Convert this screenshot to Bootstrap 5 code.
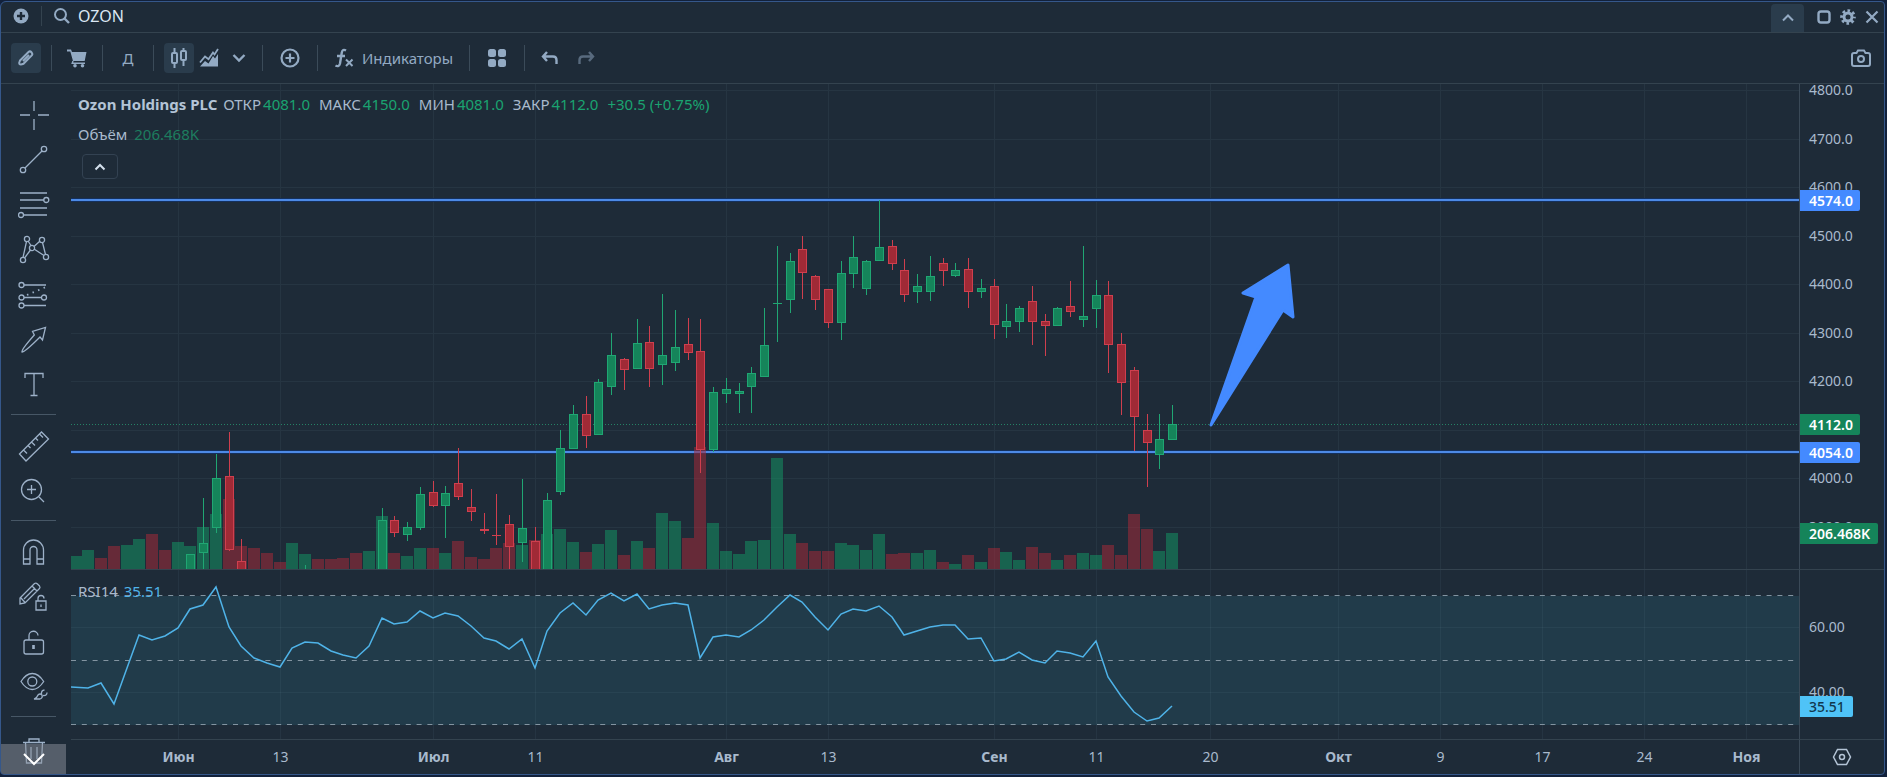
<!DOCTYPE html>
<html lang="ru">
<head>
<meta charset="utf-8">
<meta name="viewport" content="width=device-width, initial-scale=1">
<title>OZON</title>
<link href="https://cdn.jsdelivr.net/npm/bootstrap@5.3.0/dist/css/bootstrap.min.css" rel="stylesheet">
<style>
  :root { --bg:#1e2b38; --line:#34434f; --ink:#93aac3; --text:#a9bacd; --edge:#35578a; --up:#1aa370; }
  html, body { height:100%; }
  body { background:#12213b; color:var(--text); font-family:"Noto Sans","Open Sans",sans-serif; font-size:15px; line-height:20px; overflow:hidden; }
  .shell { height:100vh; padding:1px 2px 2px 0; }
  .win { background:var(--bg); border:1px solid var(--edge); border-radius:6px 4px 4px 4px; overflow:hidden; }
  .win button { background:none; border:0; padding:0; color:var(--ink); display:flex; align-items:center; justify-content:center; flex:none; }
  svg { display:block; }
  .titlebar { height:31px; padding-bottom:2px; border-bottom:1px solid var(--line); }
  .toolbar { height:51px; border-bottom:1px solid var(--line); }
  .ticker { background:none; border:0; outline:0; color:#dbe7f3; font-size:16px; width:160px; padding:0; line-height:20px; }
  .win .tbtn { width:30px; height:30px; border-radius:4px; }
  .win .tbtn.active, .win .tabup { background:#2a3c4c; }
  .win .tabup { width:33px; height:28px; border-radius:4px 4px 0 0; margin-bottom:-2px; }
  .win .slim { width:24px; }
  .win .wide { width:34px; }
  .vsep { width:1px; height:26px; background:#3b4b59; flex:none; }
  .vsep-s { width:1px; height:20px; background:#34434f; flex:none; }
  .rail { width:70px; min-height:0; overflow:hidden; padding-top:8px; flex:none; }
  .rail button { width:66px; height:45px; }
  .rail hr { width:45px; margin:7px 0 8px 10px; border:0; border-top:1px solid #475766; opacity:1; flex:none; }
  .rail svg { width:32px; height:32px; fill:none; stroke:#9db1c8; stroke-width:1.3; }
  .win .more { left:0; bottom:0; width:65px; height:30px; background:rgba(140,145,155,.5); z-index:2; color:#fff; }
  .rail .more svg { stroke:#fff; stroke-width:2; }
  .work { min-height:0; }
  .board { display:grid; grid-template-columns:minmax(0,1fr) 85px; grid-template-rows:minmax(0,1fr) 170px 34px; }
  .board > div { min-width:0; min-height:0; position:relative; overflow:hidden; }
  .board svg.plot { width:100%; height:100%; }
  .pane { border-bottom:1px solid var(--line); }
  .scale { border-left:1px solid #3a4957; }
  .legend-box { left:7px; top:10px; gap:10px; }
  .legend-row { gap:9px; }
  .legend-row b { color:#b4c4d6; font-weight:700; margin-right:2px; }
  .up { color:var(--up); }
  .legend-row span .up { margin-left:2px; }
  .vol { color:#1d7d5f; margin-left:3px; }
  .win .fold { width:36px; height:25px; border:1px solid #334252; border-radius:4px; margin-left:4px; color:#d3dfec; }
  .rsi-legend { left:7px; top:11px; }
  .rsi-legend span { color:#4fb3e8; margin-left:2px; }
  .plot text { fill:var(--text); font-size:14px; }
  .plot text.strong { font-weight:700; }
  .plot .tagtext { fill:#fff; font-weight:600; }
  .plot .darktag { fill:#12384e; font-weight:500; }
</style>
</head>
<body>
<div class="shell d-flex">
<main class="win d-flex flex-column flex-grow-1">

  <header class="titlebar d-flex align-items-center">
    <button class="slim ms-2 me-1" aria-label="Добавить"><svg width="16" height="16" viewBox="0 0 16 16"><circle cx="8" cy="8" r="7.5" fill="#93aac3"/><path d="M8 4v8M4 8h8" stroke="#1e2b38" stroke-width="2.4"/></svg></button>
    <span class="vsep-s ms-1 me-2"></span>
    <label for="ticker" class="me-2 ms-1" aria-label="Поиск"><svg width="16" height="16" viewBox="1 1 16 16" fill="none" stroke="#93aac3"><circle cx="7.5" cy="7.5" r="5.5" stroke-width="2"/><path d="M11.5 11.5L16 16" stroke-width="2.4"/></svg></label>
    <input id="ticker" class="ticker" value="OZON">
    <div class="ms-auto d-flex align-items-center align-self-end">
      <button class="tabup me-2" aria-label="Свернуть панель"><svg width="14" height="10" viewBox="0 0 14 10" fill="none" stroke="currentColor" stroke-width="2"><path d="M2 7.500L7 2.500L12 7.500"/></svg></button>
      <button class="slim" aria-label="Развернуть"><svg width="14" height="14" viewBox="0 0 14 14" fill="none" stroke="currentColor" stroke-width="2.400"><rect x="1.500" y="1.500" width="11" height="11" rx="2.500"/></svg></button>
      <button class="slim" aria-label="Настройки"><svg width="16" height="16" viewBox="-8 -8 16 16" fill="none" stroke="currentColor"><circle r="4" stroke-width="3"/><circle r="6.400" stroke-width="2.800" stroke-dasharray="2.600 2.427" stroke-dashoffset="1.300"/></svg></button>
      <button class="slim" aria-label="Закрыть"><svg width="14" height="14" viewBox="0 0 14 14" fill="none" stroke="currentColor" stroke-width="2.200"><path d="M1.500 1.500L12.500 12.500M12.500 1.500L1.500 12.500"/></svg></button>
    </div>
  </header>

  <nav class="toolbar d-flex align-items-center">
    <button class="tbtn active" style="margin-left:10px;margin-right:10px" aria-label="Рисование"><svg width="18" height="18" viewBox="0 0 18 18" fill="none" stroke="currentColor" stroke-width="2" stroke-linejoin="round"><path d="M3 11.500L11.500 3Q13 1.700 14.500 3.300Q16 5 14.800 6.400L6.500 14.800Q3.500 16 2.500 15Q1.800 14 3 11.500ZM6 12L12 6"/></svg></button>
    <span class="vsep"></span>
    <button class="tbtn wide mx-2" aria-label="Заявка"><svg width="20" height="20" viewBox="0 0 20 20" fill="currentColor"><path d="M0 1.500h4l1 2.500h14.500l-1.800 9H6L3.300 3.500H0z"/><path d="M6 13l-.8 2.200H18" fill="none" stroke="currentColor" stroke-width="1.400"/><circle cx="8" cy="17.700" r="1.800"/><circle cx="15.500" cy="17.700" r="1.800"/></svg></button>
    <span class="vsep"></span>
    <button class="tbtn wide mx-2" aria-label="Интервал: день">Д</button>
    <span class="vsep"></span>
    <button class="tbtn active" style="margin-left:10px" aria-label="Свечи"><svg width="18" height="20" viewBox="0 0 18 20" fill="none" stroke="currentColor" stroke-width="2"><path d="M4.500 0v5M4.500 15v5M13.500 0v3M13.500 12v6"/><rect x="2" y="5" width="5" height="10" rx="1"/><rect x="11" y="3" width="5" height="9" rx="1"/></svg></button>
    <button class="tbtn" aria-label="Область"><svg width="20" height="20" viewBox="0 0 20 20"><path d="M1 18.500L6 13l3.500 2.500L14 8l2 2.500L19 6v12.500z" fill="#93aac3"/><path d="M1 14.500L6 8.500l3.500 2.800L14 4.500l1.500 2L19 1" fill="none" stroke="#93aac3" stroke-width="1.800"/></svg></button>
    <button class="tbtn" aria-label="Другие типы графика"><svg width="14" height="10" viewBox="0 0 14 10" fill="none" stroke="currentColor" stroke-width="2.400"><path d="M1.500 2L7 7.500L12.500 2"/></svg></button>
    <span class="vsep ms-2 me-2"></span>
    <button class="tbtn mx-1" aria-label="Сравнить"><svg width="20" height="20" viewBox="0 0 20 20" fill="none" stroke="currentColor" stroke-width="2.200"><circle cx="10" cy="10" r="8.500"/><path d="M10 5.500v9M5.500 10h9"/></svg></button>
    <span class="vsep mx-2"></span>
    <button class="gap-2 px-2"><svg width="20" height="20" viewBox="0 0 20 20" fill="none" stroke="currentColor" stroke-width="2"><path d="M12 2.500Q8.600 .500 7.800 4.500L6 15.500Q5 19.500 1.500 17.500M3 8h8" stroke-width="2.400"/><path d="M12 11.500l6.500 6.500M18.500 11.500L12 18"/></svg><span>Индикаторы</span></button>
    <span class="vsep mx-2 me-1" style="margin-left:12px"></span>
    <button class="tbtn mx-2" aria-label="Шаблоны"><svg width="18" height="18" viewBox="0 0 18 18" fill="currentColor"><rect width="8" height="8" rx="2.500"/><rect x="10" width="8" height="8" rx="2.500"/><rect y="10" width="8" height="8" rx="2.500"/><rect x="10" y="10" width="8" height="8" rx="2.500"/></svg></button>
    <span class="vsep ms-1"></span>
    <button class="tbtn wide ms-2 me-1" aria-label="Отменить"><svg width="18" height="16" viewBox="0 0 18 16" fill="none" stroke="currentColor" stroke-width="2.400"><path d="M6 2L2 6.500L6 11M2.500 6.500H12Q15.500 6.500 15.500 10V14"/></svg></button>
    <button class="tbtn opacity-50" aria-label="Повторить"><svg width="18" height="16" viewBox="0 0 18 16" fill="none" stroke="currentColor" stroke-width="2.400"><path d="M12 2L16 6.500L12 11M15.500 6.500H6Q2.500 6.500 2.500 10V14"/></svg></button>
    <button class="tbtn ms-auto me-2" aria-label="Снимок"><svg width="20" height="18" viewBox="0 0 20 18" fill="none" stroke="currentColor" stroke-width="2"><path d="M3 4H5.500L7 1.500H13L14.500 4H17Q19 4 19 6V15Q19 17 17 17H3Q1 17 1 15V6Q1 4 3 4Z"/><circle cx="10" cy="10" r="3"/></svg></button>
  </nav>

  <div class="work d-flex flex-grow-1 position-relative">
    <aside class="rail d-flex flex-column">
      <button aria-label="Перекрестие"><svg viewBox="-16 -16 32 32"><path d="M0-14V-4M0 4V15M-14 0H-4M4 0H15"/></svg></button>
      <button aria-label="Линия"><svg viewBox="-16 -16 32 32"><circle cx="10" cy="-11" r="2.700"/><circle cx="-11" cy="10" r="2.700"/><path d="M-9 8L8-9"/></svg></button>
      <button aria-label="Уровни"><svg viewBox="-16 -16 32 32"><path d="M-14-12H13M-14-5H10M-14 3H13M-11 10H13"/><circle cx="12.300" cy="-5" r="2.500"/><circle cx="-13" cy="10" r="2.500"/></svg></button>
      <button aria-label="Паттерны"><svg viewBox="-16 -16 32 32"><circle cx="-7" cy="-11" r="2.600"/><circle cx="8" cy="-10" r="2.600"/><circle cx="-2" cy="-2" r="2.600"/><circle cx="-11" cy="10" r="2.600"/><circle cx="12" cy="7" r="2.600"/><path d="M-7.500-8.500L-11 7.500M-9.500 8L-3.500 0M-6-9L-3-4.500M0-3.500L6-9M0-1L10 5.500M8.500-7.500L11.500 4.500"/></svg></button>
      <button aria-label="Прогноз"><svg viewBox="-16 -16 32 32"><circle cx="-12.500" cy="-10" r="2.500"/><circle cx="-12.500" cy="2.500" r="2.500"/><circle cx="10" cy="2.500" r="2.500"/><circle cx="-12.500" cy="10.500" r="2.500"/><path d="M-10-10H12M-10 2.500H7.500M-10 10.500H12"/><path d="M-7 0L12-8" stroke-dasharray="1.500 4.500" stroke-width="1.800"/></svg></button>
      <button aria-label="Стрелка"><svg viewBox="-16 -16 32 32"><path d="M-12 12Q-13 10 .3-5L-1.500-8.500L11.500-12.500L8.500 0L6-3Q-9 12-12 12Z"/></svg></button>
      <button aria-label="Текст"><svg viewBox="-16 -16 32 32"><path d="M-9-7V-11.500H9V-7M0-11.500V10.500M-3.500 10.500H3.500"/></svg></button>
      <hr>
      <button aria-label="Линейка"><svg viewBox="-16 -16 32 32"><path d="M-14.500 8L7.500-14L14.500-7L-8 15ZM-10.500 4l3.500 3.500M-6 -.500l2.500 2.500M-2.500-4l3.500 3.500M1.500-8l2.500 2.500M5.500-12l3.500 3.500"/></svg></button>
      <button aria-label="Увеличить"><svg viewBox="-16 -16 32 32"><circle cx="-2.500" cy="-1.500" r="10"/><path d="M-2.500-6V3M-7-1.500H2M5 6L10 11"/></svg></button>
      <hr>
      <button aria-label="Магнит"><svg viewBox="-16 -16 32 32"><path d="M-10.500 12V-2A10 10 0 0 1 9.500-2V12H3V-2A3.500 3.500 0 0 0-4-2V12ZM-10.500 7H-4M3 7H9.500"/></svg></button>
      <button aria-label="Закрепить рисование"><svg viewBox="-16 -16 32 32"><path d="M-14 7V1L.500-13.500Q2-14.500 3.500-13L5.500-11Q6.500-9.500 5.500-8.500L-9 6ZM-13 1L-8.500 6M-2-11L3-6M-10 2L1-9M2 4H12V13H2ZM4 4V1.500A3 3 0 0 1 10 1.500M7 7.500V10"/></svg></button>
      <button aria-label="Заблокировать"><svg viewBox="-16 -16 32 32"><rect x="-10" y="-2" width="19.500" height="14" rx="2"/><path d="M-5-2V-6A4.500 4.500 0 0 1 4-6.500"/><path d="M-.500 3V7" stroke-width="2.600"/></svg></button>
      <button aria-label="Скрыть"><svg viewBox="-16 -16 32 32"><path d="M-13-5.500Q-8-13.500-1.700-13.500T9.700-5.500Q4.500 2.500-1.700 2.500T-13-5.500Z"/><circle cx="-1.700" cy="-5.500" r="4.500"/><path d="M0 12Q3 11 4 8Q6 6 8 8Q9 11 6 12ZM7.500 7Q7 3.500 10.500 3M9 8.500Q13 9 13 5.500"/></svg></button>
      <hr>
      <button aria-label="Удалить"><svg viewBox="-16 -18 32 32"><path d="M-11-7.500H11M-5-7.500V-11H5V-7.500M-8.500-7.500L-7.500 13H7.500L8.500-7.500M-3-3V9M3-3V9"/></svg></button>
      <button class="more position-absolute" aria-label="Ещё"><svg viewBox="-16 -16 32 32"><path d="M-10-5L0 5L10-5"/></svg></button>
    </aside>

    <section class="board flex-grow-1">
      <div class="pane">
        <svg class="plot" id="price"></svg>
        <div class="legend-box position-absolute d-flex flex-column">
          <div class="legend-row d-flex text-nowrap"><span><b>Ozon Holdings PLC</b> ОТКР<span class="up">4081.0</span></span><span>МАКС<span class="up">4150.0</span></span><span>МИН<span class="up">4081.0</span></span><span>ЗАКР<span class="up">4112.0</span></span><span class="up">+30.5 (+0.75%)</span></div>
          <div>Объём <span class="vol">206.468K</span></div>
          <button class="fold" aria-label="Свернуть легенду"><svg width="12" height="8" viewBox="0 0 12 8" fill="none" stroke="currentColor" stroke-width="2"><path d="M1.500 6.500L6 2L10.500 6.500"/></svg></button>
        </div>
      </div>
      <div class="pane scale"><svg class="plot" id="priceScale"></svg></div>
      <div class="pane">
        <svg class="plot" id="rsi"></svg>
        <div class="rsi-legend position-absolute">RSI14 <span>35.51</span></div>
      </div>
      <div class="pane scale"><svg class="plot" id="rsiScale"></svg></div>
      <div><svg class="plot" id="time"></svg></div>
      <div class="scale d-flex align-items-center justify-content-center"><button aria-label="Настройки осей"><svg width="20" height="18" viewBox="-10 -9 20 18" fill="none" stroke="#b4c4d6" stroke-width="1.500"><path d="M-8.500 0L-4.500-7.500H4.500L8.500 0L4.500 7.500H-4.500Z"/><circle r="2.500"/></svg></button></div>
    </section>
  </div>
</main>
</div>

<script src="https://cdn.jsdelivr.net/npm/bootstrap@5.3.0/dist/js/bootstrap.bundle.min.js"></script>
<script>
// One trading day per slot; dayX gives the centre of a slot in the plot.
const dayX = i => Math.round(4.6 + 12.75 * i);
const NS = 'http://www.w3.org/2000/svg';
function add(id, tag, attrs, text) {
  const el = document.createElementNS(NS, tag);
  for (const k in attrs) el.setAttribute(k, attrs[k]);
  if (text) el.textContent = text;
  document.getElementById(id).appendChild(el);
}
const FLOOR = 485, GRID = '#263542';
const months = [[8,'Июн',1],[16,'13'],[28,'Июл',1],[36,'11'],[51,'Авг',1],[59,'13'],[72,'Сен',1],[80,'11'],[89,'20'],[99,'Окт',1],[107,'9'],[115,'17'],[123,'24'],[131,'Ноя',1]];

// RSI band lies under its grid
add('rsi','rect',{x:0,y:26,width:'100%',height:129,fill:'#213b4a'});
for (const [i,label,strong] of months) {
  const x = dayX(i) + .5;
  add('price','line',{x1:x,x2:x,y1:0,y2:'100%',stroke:GRID});
  add('rsi','line',{x1:x,x2:x,y1:0,y2:'100%',stroke:'#8fb4c4','stroke-opacity':.07});
  add('time','text',{x,y:22,'text-anchor':'middle',class:strong?'strong':''},label);
}
const hiddenLabel = 7; // 4100 lies between the two level tags
for (let n = 0; n < 10; n++) {
  const y = Math.round(6 + n * 48.55);
  add('price','line',{x1:0,x2:'100%',y1:y+.5,y2:y+.5,stroke:GRID});
  if (n !== hiddenLabel) add('priceScale','text',{x:9,y:y+5},(4800 - n*100).toFixed(1));
}
for (const [y,label] of [[57,'60.00'],[122,'40.00']]) {
  add('rsi','line',{x1:0,x2:'100%',y1:y+.5,y2:y+.5,stroke:'#8fb4c4','stroke-opacity':.07});
  add('rsiScale','text',{x:9,y:y+5},label);
}
for (const y of [25,90,154]) add('rsi','line',{x1:0,x2:'100%',y1:y+.5,y2:y+.5,stroke:'#8394a1','stroke-dasharray':'5 5.8'});

// levels
for (const y of [116,368]) {
  add('price','line',{x1:0,x2:'100%',y1:y,y2:y,stroke:'#14305c','stroke-width':4});
  add('price','line',{x1:0,x2:'100%',y1:y,y2:y,stroke:'#4d8ae6','stroke-width':2});
}
add('price','line',{x1:0,x2:'100%',y1:340.5,y2:340.5,stroke:'#258265','stroke-dasharray':'1 2'});

// volume heights with direction
const volumes = '13g 19g 11r 23r 24g 30g 35r 19r 27g 23g 42g 55g 70r 23r 21r 16r 7r 26g 15g 10r 10r 11r 16r 18g 53g 16r 13g 21g 21r 16g 28r 12r 10r 21r 26r 24g 29r 35g 40g 27g 17r 25g 39g 14r 28g 21r 56g 48g 31r 122r 46g 18g 15g 28g 29g 111g 35g 26r 18r 18r 26g 24g 19g 35g 15r 16r 16g 19g 7r 5g 14r 7g 21r 17g 9g 22r 16r 9g 14r 16g 14g 24r 14r 55r 40r 18g 36g'.split(' ');
volumes.forEach((v,i) => {
  const h = parseInt(v), left = Math.max(0, dayX(i) - 6);
  add('price','rect',{x:left,y:FLOOR-h,width:dayX(i)+6-left,height:h,fill:v.endsWith('g')?'#15946499':'#a52a3a99','fill-opacity':.9});
});

// candles: day, direction, high, body top, body bottom, low
const PANE_TOP = 84;
const candles = [
[9,1,554,554,570,570],[10,1,498,543,553,570],[11,1,454,478,528,533],[12,0,432,476,550,551],[13,0,539,561,570,570],[18,1,565,570,570,570],
[24,1,508,520,570,570],[25,0,516,520,533,537],[26,1,522,527,535,541],[27,1,487,494,528,530],[28,0,481,492,506,507],[29,1,486,493,506,538],
[30,0,448,483,497,500],[31,0,489,507,512,521],[32,0,513,529,531,534],[33,0,494,535,536,545],[34,0,515,524,547,570],[35,1,479,528,543,562],
[36,0,527,541,570,570],[37,1,493,500,570,570],[38,1,430,448,492,495],[39,1,405,414,449,449],[40,0,396,414,436,448],[41,1,379,382,435,435],
[42,1,333,355,387,395],[43,0,358,359,370,390],[44,1,319,343,369,369],[45,0,326,342,369,387],[46,1,294,355,365,385],[47,1,310,347,363,371],
[48,0,318,344,353,360],[49,0,319,351,450,473],[50,1,387,392,450,452],[51,1,378,389,394,403],[52,1,383,391,394,413],[53,1,367,373,387,413],
[54,1,308,345,377,377],[55,1,246,303,304,342],[56,1,253,261,300,313],[57,0,236,249,273,299],[58,0,275,276,300,310],[59,0,289,289,323,328],
[60,1,261,273,323,340],[61,1,236,257,274,288],[62,1,260,261,289,295],[63,1,200,247,261,261],[64,0,240,246,264,270],[65,0,259,270,295,302],
[66,1,274,286,292,303],[67,1,256,276,292,301],[68,0,258,263,271,286],[69,1,263,270,276,277],[70,0,258,269,292,308],[71,1,279,288,292,298],
[72,0,279,286,325,339],[73,1,304,321,327,338],[74,1,306,308,322,332],[75,0,286,301,322,345],[76,0,314,321,326,356],[77,1,307,308,326,326],
[78,0,281,306,312,317],[79,1,246,316,320,327],[80,1,280,295,309,328],[81,0,281,295,345,373],[82,0,333,344,383,415],[83,0,367,370,417,451],
[84,0,414,430,443,487],[85,1,414,439,455,469],[86,1,405,424,440,440]];
for (const [i,up,hi,a,b,lo] of candles) {
  const x = dayX(i), edge = up ? '#20a673' : '#cf3f4e';
  add('price','rect',{x:x,y:hi-PANE_TOP,width:1,height:lo-hi,fill:edge});
  if (b - a > 1) add('price','rect',{x:x-3.5,y:a-PANE_TOP+.5,width:8,height:b-a-1,fill:up?'#15845a':'#a02a36',stroke:edge});
  else if (b > a) add('price','rect',{x:x-4,y:a-PANE_TOP,width:9,height:1,fill:edge});
}

// trend arrow starts on the 20th
add('price','path',{d:'M1140 341L1185 213L1172 209L1217 181L1222 233L1212 226Z',fill:'#448aff',stroke:'#448aff','stroke-width':3,'stroke-linejoin':'round'});

const rsi = [687,688,683,704,668,635,640,636,628,609,605,587,627,646,658,663,667,648,642,643,651,655,658,646,618,624,622,611,618,613,616,626,638,641,649,639,668,631,613,603,615,600,593,601,594,609,605,603,605,658,637,635,637,630,620,607,595,602,617,630,614,609,611,606,617,635,631,627,625,625,639,638,661,659,652,660,663,651,653,657,641,677,696,712,721,718,706];
add('rsi','polyline',{points:rsi.map((y,i)=>(i?dayX(i):0)+','+(y-570)).join(' '),fill:'none',stroke:'#4fb3e8','stroke-width':1.5});

function tag(id,y,w,fill,label,cls) {
  add(id,'path',{d:`M-1 ${y}H${w-3}q2 0 2 2V${y+19}q0 2-2 2H-1Z`,fill});
  add(id,'text',{x:9,y:y+16,class:cls||'tagtext'},label);
}
tag('priceScale',106,61,'#448aff','4574.0');
tag('priceScale',330,61,'#15845a','4112.0');
tag('priceScale',358,61,'#448aff','4054.0');
tag('priceScale',439,79,'#15845a','206.468K');
tag('rsiScale',126,54,'#4fc3f7','35.51','darktag');
</script>
</body>
</html>
